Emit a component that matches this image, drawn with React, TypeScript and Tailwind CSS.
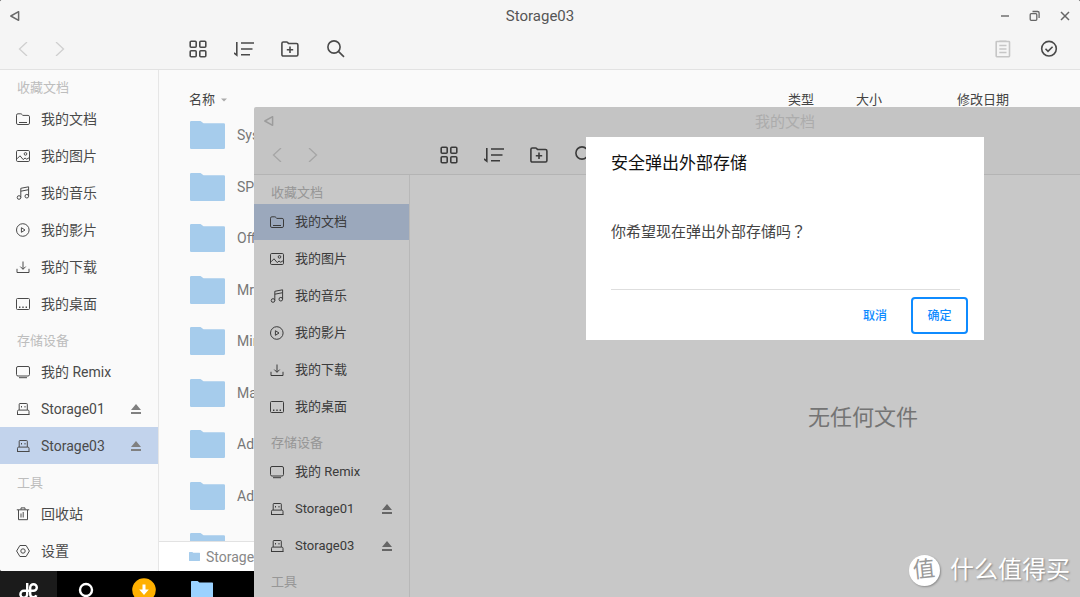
import type { ReactNode } from "react";
import clsx from "clsx";

type IconName =
	| "docs"
	| "pictures"
	| "music"
	| "movies"
	| "downloads"
	| "desktop"
	| "device"
	| "usb"
	| "trash"
	| "settings";

type NavItem = { icon: IconName; label: string; ejectable?: boolean };
type NavSection = { title: string; items: NavItem[] };

const SECTIONS: NavSection[] = [
	{
		title: "收藏文档",
		items: [
			{ icon: "docs", label: "我的文档" },
			{ icon: "pictures", label: "我的图片" },
			{ icon: "music", label: "我的音乐" },
			{ icon: "movies", label: "我的影片" },
			{ icon: "downloads", label: "我的下载" },
			{ icon: "desktop", label: "我的桌面" },
		],
	},
	{
		title: "存储设备",
		items: [
			{ icon: "device", label: "我的 Remix" },
			{ icon: "usb", label: "Storage01", ejectable: true },
			{ icon: "usb", label: "Storage03", ejectable: true },
		],
	},
	{
		title: "工具",
		items: [
			{ icon: "trash", label: "回收站" },
			{ icon: "settings", label: "设置" },
		],
	},
];

const FILES = ["System", "SPSS", "Office", "Mr.Robot", "Minecraft", "Macromedia", "Adobe", "Adobe CC", "Backup"];

const ICON_PATHS: Record<IconName, ReactNode> = {
	docs: (
		<>
			<path d="M.5 3.2c0-.9.5-1.4 1.4-1.4h2.9c.5 0 .8.2 1.1.6l.8 1h5.4c.9 0 1.4.5 1.4 1.4v6.3c0 .9-.5 1.4-1.4 1.4H1.9c-.9 0-1.4-.5-1.4-1.4z" />
			<path d="M3 10.5h8" />
		</>
	),
	pictures: (
		<>
			<rect x=".5" y="1.5" width="13" height="11" rx="1.2" />
			<circle cx="9.5" cy="4.9" r="1.3" />
			<path d="M1 9.8l3-3 3.2 3.8 1.8-1.6 1.7 1.2L13 8.8" />
		</>
	),
	music: (
		<>
			<circle cx="3" cy="11.5" r="1.8" />
			<circle cx="10.8" cy="10.2" r="1.8" />
			<path d="M4.8 11.5V2.3L12.6.8v9.4M4.8 5.2l7.8-1.5" />
		</>
	),
	movies: (
		<>
			<circle cx="6.8" cy="7" r="6.3" />
			<path d="M5.4 4.7v4.6L9 7z" />
		</>
	),
	downloads: <path d="M1 8.8v3.7h12V8.8M7 1.5v7.7M4.3 6.6L7 9.3l2.7-2.7" />,
	desktop: (
		<>
			<rect x=".5" y="1.5" width="13" height="11" rx="1" />
			<path d="M3 10.2h1.4M6.3 10.2h1.4M9.6 10.2H11" strokeWidth="1.5" />
		</>
	),
	device: (
		<>
			<rect x=".5" y="1.5" width="13" height="9.5" rx="1.5" />
			<path d="M3 12.7h8" />
		</>
	),
	usb: (
		<>
			<path d="M3.2 8V2.2c0-.5.2-.7.7-.7h6.7c.5 0 .7.2.7.7V8" />
			<path d="M1.5 12.5V9.3c0-.8.4-1.2 1.2-1.2h9.1c.8 0 1.2.4 1.2 1.2v3.2M1 12.5h12.5" />
			<path d="M5.5 4v1.5M9 4v1.5" />
		</>
	),
	trash: (
		<>
			<path d="M.8 2.8h12.4M5 2.5V.9h4v1.6M2.5 3v9.7h9V3" />
			<path d="M5 6.5v4M7.2 5v5.5" />
		</>
	),
	settings: (
		<>
			<path d="M3.9 1.5h6.2L13.4 7l-3.3 5.5H3.9L.6 7z" strokeLinejoin="round" />
			<circle cx="7" cy="7" r="2.2" />
		</>
	),
};

function NavIcon({ name }: { name: IconName }) {
	return (
		<svg viewBox="0 0 14 14" className="size-3.5 shrink-0" fill="none" stroke="currentColor" strokeWidth="1" aria-hidden>
			{ICON_PATHS[name]}
		</svg>
	);
}

function ToolIcon({ children }: { children: ReactNode }) {
	return (
		<svg viewBox="0 0 20 20" className="size-5" fill="none" stroke="currentColor" strokeWidth="1.6" aria-hidden>
			{children}
		</svg>
	);
}

function Folder({ className }: { className: string }) {
	return (
		<svg viewBox="0 0 35 28" preserveAspectRatio="none" className={className} fill="currentColor" aria-hidden>
			<path d="M0 1.2Q0 0 1.2 0H10.5L13.5 2.3H33.8Q35 2.3 35 3.5V26.8Q35 28 33.8 28H1.2Q0 28 0 26.8Z" />
		</svg>
	);
}

function Toolbar({ title, compact }: { title: string; compact?: boolean }) {
	return (
		<header className="shrink-0 border-b border-[#e2e2e2] bg-[#f5f5f5] pb-[3px] text-[#4a4a4a]">
			<div className="grid h-8 grid-cols-[1fr_auto_1fr] items-center">
				<button
					type="button"
					aria-label="返回"
					className={clsx("ml-2 w-3.5", compact ? "pb-1 text-[#c4c4c4]" : "text-[#6a6a6a]")}
				>
					<svg viewBox="0 0 14 14" className="size-3.5" fill="none" stroke="currentColor" strokeWidth="1.5" aria-hidden>
						<path d="M10.6 2.7v8.6L2.8 7z" strokeLinejoin="round" />
					</svg>
				</button>
				<h1 className={clsx("text-[15px] leading-5", compact ? "pb-0.5 text-[#d8d8d8]" : "text-[#555]")}>{title}</h1>
				<div className="flex justify-end gap-4 pr-2 text-[#666]">
					<button type="button" aria-label="最小化">
						<svg viewBox="0 0 14 14" className="size-3.5" stroke="currentColor" strokeWidth="1.4" aria-hidden>
							<path d="M3 7h8" />
						</svg>
					</button>
					<button type="button" aria-label="还原">
						<svg viewBox="0 0 14 14" className="size-3.5" fill="none" stroke="currentColor" strokeWidth="1.3" aria-hidden>
							<rect x="2.2" y="4.7" width="6.6" height="6.6" rx="1" />
							<path d="M4.5 2.5h5.2c.9 0 1.4.5 1.4 1.4v5.2" />
						</svg>
					</button>
					<button type="button" aria-label="关闭">
						<svg viewBox="0 0 14 14" className="size-3.5" stroke="currentColor" strokeWidth="1.5" aria-hidden>
							<path d="M3 3l8 8M11 3l-8 8" />
						</svg>
					</button>
				</div>
			</div>
			<div className={clsx("flex items-center", compact ? "h-8" : "h-[34px]")}>
				<div className={clsx("flex shrink-0 pl-4 text-[#cfcfcf]", compact ? "w-[185px] gap-[22px]" : "w-[188px] gap-[23px]")}>
					<button type="button" aria-label="后退">
						<svg viewBox="0 0 14 14" className="size-3.5" fill="none" stroke="currentColor" strokeWidth="1.3" aria-hidden>
							<path d="M11 0L3.5 7l7.5 7" />
						</svg>
					</button>
					<button type="button" aria-label="前进">
						<svg viewBox="0 0 14 14" className="size-3.5" fill="none" stroke="currentColor" strokeWidth="1.3" aria-hidden>
							<path d="M3 0l7.5 7L3 14" />
						</svg>
					</button>
				</div>
				<div className={clsx("flex", compact ? "gap-[25px]" : "gap-[26px]")}>
					<button type="button" aria-label="网格视图">
						<ToolIcon>
							<rect x="2.2" y="2.2" width="6" height="6" rx="1" />
							<rect x="11.8" y="2.2" width="6" height="6" rx="1" />
							<rect x="2.2" y="11.8" width="6" height="6" rx="1" />
							<rect x="11.8" y="11.8" width="6" height="6" rx="1" />
						</ToolIcon>
					</button>
					<button type="button" aria-label="排序">
						<ToolIcon>
							<path d="M2.8 3v13.2L0 14M7 4h13M7 10h11.5M7 15.8h9" />
						</ToolIcon>
					</button>
					<button type="button" aria-label="新建文件夹">
						<ToolIcon>
							<path d="M1.9 4.4c0-.9.5-1.4 1.4-1.4h3.3c.5 0 .8.2 1.1.6l.7.9h8.1c.9 0 1.4.5 1.4 1.4v9.7c0 .9-.5 1.4-1.4 1.4H3.3c-.9 0-1.4-.5-1.4-1.4z" />
							<path d="M10 7.5v6.4M6.8 10.7h6.4" />
						</ToolIcon>
					</button>
					<button type="button" aria-label="搜索">
						<ToolIcon>
							<circle cx="8" cy="8" r="6.1" />
							<path d="M12.4 12.4l5.6 5.5" />
						</ToolIcon>
					</button>
				</div>
				<div className="ml-auto flex gap-[26px] pr-[21px]">
					<button type="button" aria-label="粘贴" className="text-[#c6c6c6]">
						<ToolIcon>
							<rect x="3.2" y="2.5" width="13.3" height="15.2" rx=".6" />
							<path d="M6.3 2.2h7.2M6.3 6.5h7.2M6.3 10h7.2M6.3 13.5h7.2" strokeWidth="1.3" />
						</ToolIcon>
					</button>
					<button type="button" aria-label="选择">
						<ToolIcon>
							<circle cx="10" cy="9.7" r="7.3" />
							<path d="M6.5 9.8l2.5 2.5 4.6-4.6" />
						</ToolIcon>
					</button>
				</div>
			</div>
		</header>
	);
}

function Sidebar({ active, compact }: { active: string; compact?: boolean }) {
	return (
		<nav
			className={clsx("shrink-0 overflow-hidden border-r border-[#e6e6e6] bg-[#fafafa]", compact ? "w-[156px]" : "w-[159px]")}
		>
			{SECTIONS.map((section) => (
				<section key={section.title}>
					<h2
						className={clsx(
							"flex items-center pl-[17px] pt-1.5 text-[13px] leading-5 text-[#bdbdbd]",
							compact ? "h-[29px]" : "h-[30px]",
						)}
					>
						{section.title}
					</h2>
					<ul className={clsx("flex flex-col", compact ? "gap-px" : "pb-px")}>
						{section.items.map((item) => (
							<li
								key={item.label}
								className={clsx(
									"flex items-center pr-4 leading-5 text-[#4a4a4a]",
									compact ? "h-9 text-[13px]" : "h-[37px] text-sm",
									item.label === active && "bg-[#c2d3ec]",
								)}
							>
								<a href="#" className="flex flex-1 items-center gap-[11px] pl-4">
									<NavIcon name={item.icon} />
									{item.label}
								</a>
								{item.ejectable && (
									<button type="button" aria-label={`弹出 ${item.label}`} className="text-[#808080]">
										<svg viewBox="0 0 12 12" className="size-3" fill="currentColor" aria-hidden>
											<path d="M6 1l5 6H1zM1 9h10v2H1z" />
										</svg>
									</button>
								)}
							</li>
						))}
					</ul>
				</section>
			))}
		</nav>
	);
}

function FileTable() {
	return (
		<table className="w-full table-fixed text-left text-[#444]">
			<colgroup>
				<col />
				<col className="w-[68px]" />
				<col className="w-[101px]" />
				<col className="w-[123px]" />
			</colgroup>
			<thead>
				<tr className="h-[39px] align-bottom text-[13px] leading-[18px]">
					<th className="pl-[30px] font-normal">
						<span className="flex items-center gap-1.5">
							名称
							<svg viewBox="0 0 6 4" className="h-1 w-1.5" fill="#aaa" aria-hidden>
								<path d="M0 .5h6L3 3.5z" />
							</svg>
						</span>
					</th>
					<th className="font-normal">类型</th>
					<th className="font-normal">大小</th>
					<th className="font-normal">修改日期</th>
				</tr>
			</thead>
			<tbody>
				{FILES.map((name) => (
					<tr key={name} className="odd:h-[52px] even:h-[51px]">
						<td className="pl-[31px]" colSpan={4}>
							<span className="flex items-center gap-3 text-sm text-[#777]">
								<Folder className="h-7 w-[35px] shrink-0 text-[#a6ccec]" />
								{name}
							</span>
						</td>
					</tr>
				))}
			</tbody>
		</table>
	);
}

function EjectDialog() {
	return (
		<div role="dialog" aria-labelledby="eject-title" className="w-[398px] bg-white pb-1.5 pl-[25px] pr-4">
			<h2 id="eject-title" className="pt-3.5 text-[17px] leading-6 text-[#111]">
				安全弹出外部存储
			</h2>
			<p className="mr-2 border-b border-[#dedede] pb-[47px] pt-[46px] text-[15px] leading-5 text-[#444]">
				你希望现在弹出外部存储吗<span className="font-['Noto_Sans_CJK_TC',sans-serif]">？</span>
			</p>
			<div className="flex justify-end gap-3 pt-[7px] text-xs font-medium text-[#0f8bff]">
				<button type="button" className="px-3">
					取消
				</button>
				<button type="button" className="h-[37px] w-[57px] rounded border-2 border-[#0f8bff]">
					确定
				</button>
			</div>
		</div>
	);
}

function Taskbar() {
	return (
		<footer className="-mb-3 flex h-[38px] shrink-0 items-center text-white">
			<button type="button" aria-label="开始" className="grid h-full w-[57px] place-items-center bg-[#1b1b1b]">
				<svg viewBox="0 0 20 20" className="size-5" fill="none" stroke="currentColor" strokeWidth="2.4" aria-hidden>
					<path d="M8.2 3v11.2a3.4 3.4 0 1 1-3.4-3.4h9.7a3.3 3.3 0 1 0-3.3-3.3v6.5c0 2 1.2 3.2 3 3.2 1.6 0 2.6-.8 3.2-2" />
				</svg>
			</button>
			<button type="button" aria-label="主页" className="grid w-[58px] place-items-center">
				<svg viewBox="0 0 16 16" className="size-4" fill="none" stroke="currentColor" strokeWidth="2.4" aria-hidden>
					<circle cx="8" cy="8" r="6" />
				</svg>
			</button>
			<button type="button" aria-label="下载" className="grid w-[58px] place-items-center">
				<svg viewBox="0 0 24 24" className="size-6" aria-hidden>
					<circle cx="12" cy="12" r="11.8" fill="#ffb000" />
					<path d="M10.5 6.5h3v5h3.3L12 17l-4.800-5.500h3.300z" fill="#fff" />
				</svg>
			</button>
			<button type="button" aria-label="文件管理器" className="grid w-[58px] place-items-center">
				<Folder className="h-[18px] w-[22px] text-[#9bd2ff]" />
			</button>
		</footer>
	);
}

export default function App() {
	return (
		<div className="relative flex h-screen flex-col overflow-hidden bg-black font-['Roboto','Noto_Sans_CJK_SC',sans-serif]">
			<div className="flex min-h-0 flex-1 flex-col overflow-hidden rounded-[2px] bg-[#fafafa]">
				<Toolbar title="Storage03" />
				<div className="flex min-h-0 flex-1">
					<Sidebar active="Storage03" />
					<main className="flex min-w-0 flex-1 flex-col">
						<div className="min-h-0 flex-1 overflow-hidden">
							<FileTable />
						</div>
						<div className="flex h-[30px] shrink-0 items-center gap-1.5 border-t border-[#e2e2e2] bg-white pl-[30px] text-sm text-[#888]">
							<Folder className="h-[9px] w-[11px] text-[#a6ccec]" />
							Storage03
						</div>
					</main>
				</div>
			</div>
			<Taskbar />

			{/* second window, dragged partly off the right and bottom edges */}
			<div className="absolute -bottom-[63px] -right-[236px] left-[254px] top-[107px] flex flex-col overflow-hidden rounded-[2px] bg-[#fafafa]">
				<Toolbar title="我的文档" compact />
				<div className="flex min-h-0 flex-1">
					<Sidebar active="我的文档" compact />
					<main className="grid flex-1 place-items-center text-[22px] text-[#929292]">
						<p>无任何文件</p>
					</main>
				</div>
				<div className="absolute inset-0 flex items-start justify-center bg-black/20 pt-[30px]">
					<EjectDialog />
				</div>
			</div>

			<div className="absolute bottom-[11px] right-2.5 flex items-center gap-2.5 text-2xl text-white">
				<span className="grid size-[31px] place-items-center rounded-full bg-white text-[22px] text-[#999] shadow-[1px_1px_2px_rgba(0,0,0,0.3)]">
					<span className="-rotate-6">值</span>
				</span>
				<span className="leading-8 [text-shadow:1px_1px_2px_rgba(0,0,0,0.35)]">什么值得买</span>
			</div>
		</div>
	);
}
